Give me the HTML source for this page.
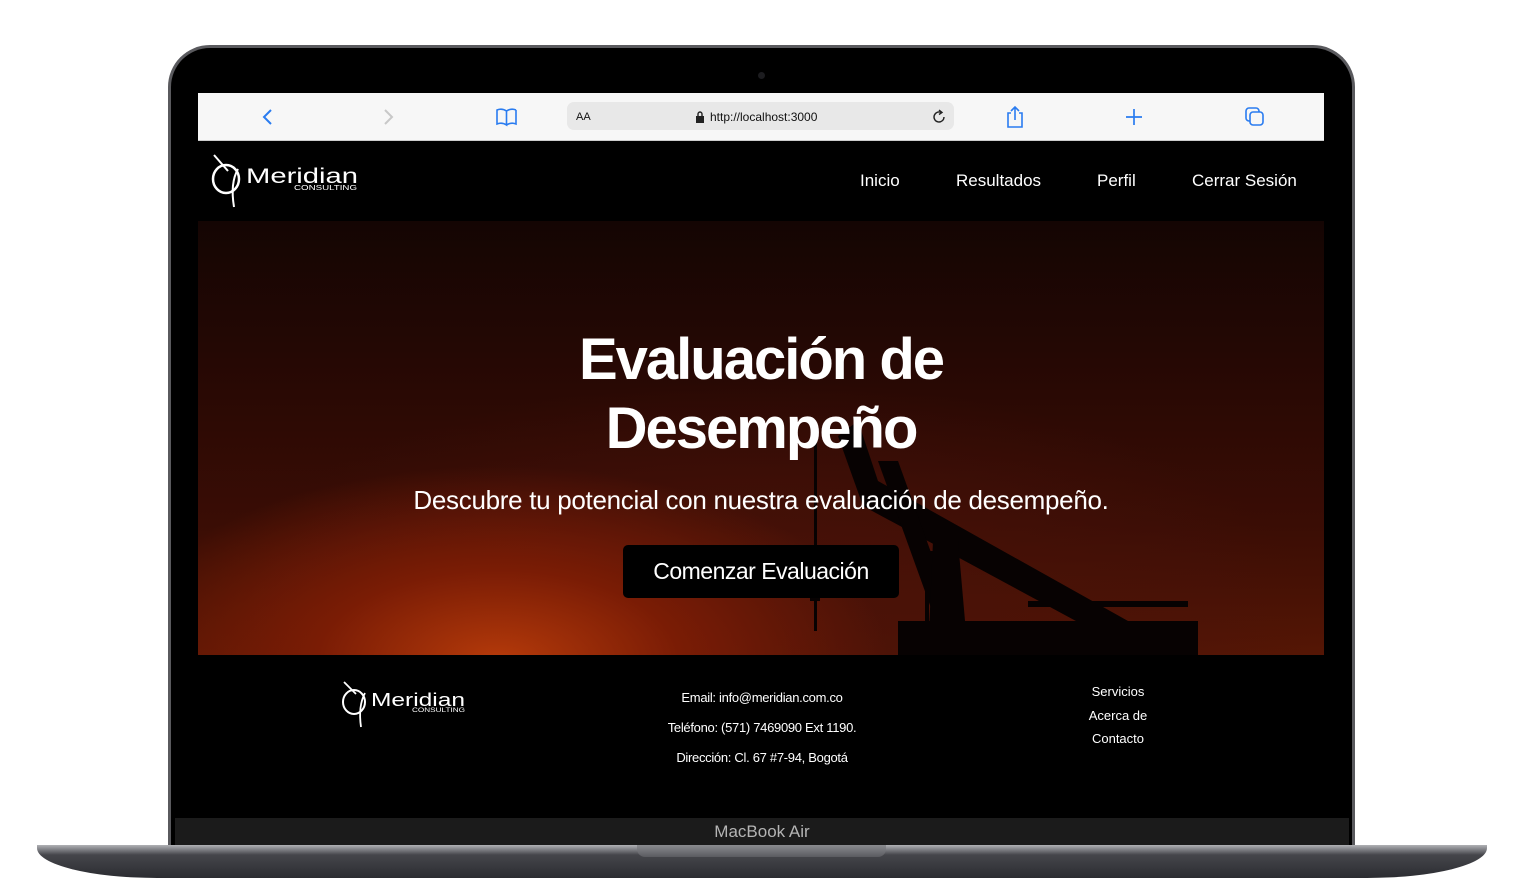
<!DOCTYPE html>
<html><head><meta charset="utf-8"><style>
*{margin:0;padding:0;box-sizing:border-box}
body{width:1515px;height:896px;background:#fff;position:relative;overflow:hidden;font-family:"Liberation Sans",sans-serif}
.lid{position:absolute;left:168px;top:45px;width:1187px;height:810px;background:#000;border-radius:42px 42px 0 0;border:3px solid #5a5a5e;border-bottom:none}
.cam{position:absolute;left:758px;top:72px;width:7px;height:7px;border-radius:50%;background:#1c1c1f}
.bar{position:absolute;left:198px;top:93px;width:1126px;height:48px;background:#f7f7f7;border-bottom:1px solid #ccc}
.url{position:absolute;left:369px;top:9px;width:387px;height:28px;background:#e8e8e8;border-radius:7px;font-size:12px;color:#111}
.nav{position:absolute;left:198px;top:141px;width:1126px;height:80px;background:#000}
.nav a{position:absolute;top:30px;color:#fff;font-size:17px}
.hero{position:absolute;left:198px;top:221px;width:1126px;height:434px;overflow:hidden;
background:radial-gradient(ellipse 520px 260px at 300px 440px,#b53a0a 0%,#7a1c05 35%,rgba(60,12,4,0) 75%),
radial-gradient(ellipse 700px 300px at 560px 400px,#4a1208,rgba(0,0,0,0) 80%),
linear-gradient(180deg,#140503 0%,#2a0904 40%,#3a0d05 70%,#551605 100%)}
.hero h1{position:absolute;left:0;width:100%;text-align:center;color:#fff;font-size:58px;font-weight:bold;line-height:69px;top:104px;letter-spacing:-2px}
.hero p{position:absolute;left:0;width:100%;text-align:center;color:#fff;font-size:26px;top:264px;letter-spacing:-0.3px}
.btn{position:absolute;left:425px;top:324px;width:276px;height:53px;background:#000;border-radius:5px;color:#fff;font-size:23px;text-align:center;line-height:53px;letter-spacing:-0.5px}
.foot{position:absolute;left:198px;top:655px;width:1126px;height:142px;background:#000;color:#fff;font-size:13px}
.chin{position:absolute;left:175px;top:818px;width:1174px;height:28px;background:#1b1b1b;color:#b4b4b4;font-size:17px;text-align:center;line-height:28px}
.base{position:absolute;left:37px;top:845px;width:1450px;height:33px;background:linear-gradient(#b0b1b5 0,#85868b 12%,#45464b 30%,#2b2c31 100%);border-radius:0 0 120px 120px/0 0 30px 30px}
.notch{position:absolute;left:637px;top:845px;width:249px;height:12px;background:linear-gradient(#8a8b8f,#5a5b60);border-radius:0 0 8px 8px}
</style></head><body>
<div class="lid"></div>
<div class="cam"></div>
<div class="bar">
<svg style="position:absolute;left:60px;top:14px" width="20" height="20"><path d="M13 3 L6 10 L13 17" fill="none" stroke="#2a7cf0" stroke-width="2"/></svg>
<svg style="position:absolute;left:180px;top:14px" width="20" height="20"><path d="M7 3 L14 10 L7 17" fill="none" stroke="#c8c8c8" stroke-width="2"/></svg>
<svg style="position:absolute;left:297px;top:13px" width="24" height="22"><path d="M2 4 Q7 2 11.5 5 L11.5 19 Q7 16 2 18 Z M21 4 Q16 2 11.5 5 M21 4 L21 18 Q16 16 11.5 19" fill="none" stroke="#2a7cf0" stroke-width="1.6"/></svg>
<div class="url"><span style="position:absolute;left:9px;top:9px;font-size:11px">AA</span>
<svg style="position:absolute;left:128px;top:9px" width="10" height="12"><rect x="1" y="5" width="8" height="7" fill="#222"/><path d="M3 5V3a2 2 0 0 1 4 0v2" fill="none" stroke="#222" stroke-width="1.4"/></svg>
<span style="position:absolute;left:143px;top:8px">http://localhost:3000</span>
<svg style="position:absolute;left:363px;top:6px" width="18" height="18"><path d="M14 9a5 5 0 1 1-3-4.6" fill="none" stroke="#222" stroke-width="1.4"/><path d="M9 2l3 2.5-3 2" fill="none" stroke="#222" stroke-width="1.4"/></svg></div>
<svg style="position:absolute;left:806px;top:11px" width="22" height="26"><path d="M7 9H4v14h14V9h-3 M11 16V3 M7 7l4-4 4 4" fill="none" stroke="#2a7cf0" stroke-width="1.6"/></svg>
<svg style="position:absolute;left:926px;top:14px" width="20" height="20"><path d="M10 2v16M2 10h16" stroke="#2a7cf0" stroke-width="1.7"/></svg>
<svg style="position:absolute;left:1046px;top:13px" width="22" height="22"><rect x="2" y="2" width="13" height="13" rx="3" fill="none" stroke="#2a7cf0" stroke-width="1.6"/><rect x="6" y="6" width="13" height="13" rx="3" fill="#f7f7f7" stroke="#2a7cf0" stroke-width="1.6"/></svg>
</div>
<div class="nav">
<svg style="position:absolute;left:12px;top:12px" width="160" height="58"><path d="M4 2 L18 18" stroke="#fff" stroke-width="2"/><ellipse cx="16" cy="26" rx="13" ry="14" fill="none" stroke="#fff" stroke-width="2.5"/><path d="M28 16 Q20 30 24 54" fill="none" stroke="#fff" stroke-width="2"/>
<text x="36" y="30" fill="#fff" font-size="21" font-family="Liberation Sans" textLength="112" lengthAdjust="spacingAndGlyphs">Meridian</text><text x="84" y="37" fill="#fff" font-size="7" font-family="Liberation Sans" textLength="63" lengthAdjust="spacingAndGlyphs">CONSULTING</text></svg>
<a style="left:662px">Inicio</a><a style="left:758px">Resultados</a><a style="left:899px">Perfil</a><a style="left:994px">Cerrar Sesión</a>
</div>
<div class="hero">
<svg style="position:absolute;left:0;top:0" width="1126" height="434">
<g fill="#070202">
<polygon points="640,215 660,200 680,260 930,400 915,420 665,285"/>
<polygon points="680,240 700,240 770,434 750,434"/>
<polygon points="735,320 760,320 770,434 730,434"/>
<rect x="726" y="330" width="60" height="6"/>
<rect x="727" y="330" width="4" height="90"/>
<rect x="616" y="210" width="3" height="200"/>
<rect x="612" y="360" width="10" height="20"/>
<polygon points="700,400 1000,400 1000,434 700,434"/>
<rect x="830" y="380" width="160" height="6"/>
</g></svg>
<h1>Evaluación de<br>Desempeño</h1>
<p>Descubre tu potencial con nuestra evaluación de desempeño.</p>
<div class="btn">Comenzar Evaluación</div>
</div>
<div class="foot">
<svg style="position:absolute;left:143px;top:25px" width="130" height="50"><path d="M3 2 L15 14" stroke="#fff" stroke-width="1.8"/><ellipse cx="13" cy="22" rx="11" ry="12" fill="none" stroke="#fff" stroke-width="2"/><path d="M24 13 Q17 26 20 47" fill="none" stroke="#fff" stroke-width="1.8"/>
<text x="30" y="26" fill="#fff" font-size="18" font-family="Liberation Sans" textLength="94" lengthAdjust="spacingAndGlyphs">Meridian</text><text x="71" y="32" fill="#fff" font-size="6" font-family="Liberation Sans" textLength="53" lengthAdjust="spacingAndGlyphs">CONSULTING</text></svg>
<div style="position:absolute;left:380px;width:368px;text-align:center;top:28px;line-height:30px;letter-spacing:-0.3px">Email: info@meridian.com.co<br>Teléfono: (571) 7469090 Ext 1190.<br>Dirección: Cl. 67 #7-94, Bogotá</div>
<div style="position:absolute;left:870px;width:100px;text-align:center;top:25px;line-height:23.5px">Servicios<br>Acerca de<br>Contacto</div>
</div>
<div class="chin">MacBook Air</div>
<div class="base"></div>
<div class="notch"></div>
</body></html>
